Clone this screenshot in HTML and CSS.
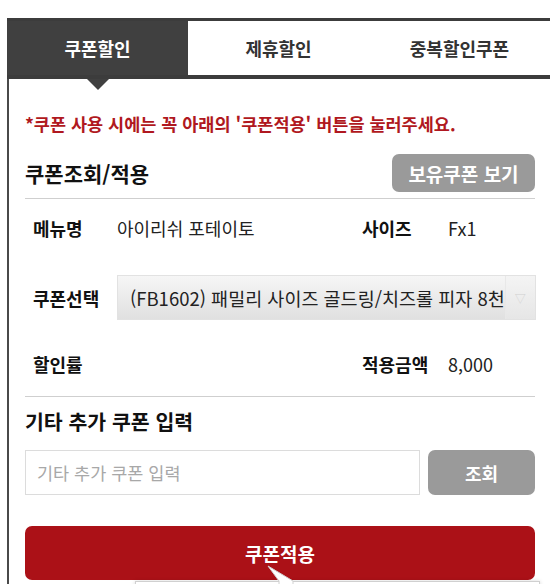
FILE: index.html
```html
<!DOCTYPE html>
<html lang="ko">
<head>
<meta charset="utf-8">
<link rel="stylesheet" href="styles.css">
</head>
<body>
<div class="frame">
  <div class="tabs">
    <div class="tab active">쿠폰할인</div>
    <div class="tab">제휴할인</div>
    <div class="tab">중복할인쿠폰</div>
  </div>
  <div class="content">
    <p class="note">*쿠폰 사용 시에는 꼭 아래의 '쿠폰적용' 버튼을 눌러주세요.</p>
    <div class="head-row">
      <h2 class="title">쿠폰조회/적용</h2>
      <button class="btn-gray btn-own">보유쿠폰 보기</button>
    </div>
    <div class="info">
      <div class="row row-menu">
        <span class="label">메뉴명</span>
        <span class="value grow">아이리쉬 포테이토</span>
        <span class="label label-r">사이즈</span>
        <span class="value">Fx1</span>
      </div>
      <div class="row row-select">
        <span class="label">쿠폰선택</span>
        <div class="select">
          <span class="select-text">(FB1602) 패밀리 사이즈 골드링/치즈롤 피자 8천</span>
          <span class="select-arrow">▽</span>
        </div>
      </div>
      <div class="row row-rate">
        <span class="label grow">할인률</span>
        <span class="label label-r">적용금액</span>
        <span class="value">8,000</span>
      </div>
    </div>
    <h2 class="title title2">기타 추가 쿠폰 입력</h2>
    <div class="input-row">
      <div class="input"><span class="placeholder">기타 추가 쿠폰 입력</span></div>
      <button class="btn-gray btn-search">조회</button>
    </div>
    <button class="btn-apply">쿠폰적용</button>
  </div>
</div>
<div class="tooltip">
  <svg class="tip-pointer" width="30" height="20" viewBox="0 0 30 20"><polygon points="1,1 26,16 26,20 12,20 12,16" fill="#fff" stroke="#d0d0d0" stroke-width="1"/></svg>
</div>
</body>
</html>
```
FILE: styles.css
```css
* { box-sizing: border-box; }
html, body { margin: 0; padding: 0; background: #fff; }
body {
  font-family: "Noto Sans CJK KR", "Noto Sans", sans-serif;
  color: #222;
  width: 550px;
  height: 584px;
  overflow: hidden;
  position: relative;
}
.frame {
  margin: 18px 0 0 7px;
  border-left: 2px solid #4a4a4a;
  min-height: 600px;
}
.tabs {
  display: flex;
  height: 61px;
  margin-left: -2px;
}
.tab {
  flex: 1;
  display: flex;
  align-items: center;
  justify-content: center;
  font-size: 18px;
  font-weight: 700;
  color: #333;
  background: #fff;
  border-top: 3px solid #3c3c3c;
  border-bottom: 4px solid #3c3c3c;
}
.tab.active {
  background: #404040;
  color: #fff;
  position: relative;
}
.tab.active::after {
  content: "";
  position: absolute;
  left: 50%;
  bottom: -15px;
  margin-left: -11px;
  border-left: 11px solid transparent;
  border-right: 11px solid transparent;
  border-top: 11px solid #404040;
}
.content {
  padding: 33px 15px 0 16px;
}
.note {
  margin: 0;
  font-size: 17.5px;
  line-height: 24px;
  font-weight: 700;
  color: #b01820;
  white-space: nowrap;
}
.head-row {
  display: flex;
  justify-content: space-between;
  align-items: center;
  margin-top: 18px;
  padding-bottom: 6px;
  border-bottom: 1px solid #cfcfcf;
}
.title {
  margin: 0;
  font-size: 21px;
  line-height: 28px;
  font-weight: 700;
  color: #111;
}
button {
  font-family: inherit;
  border: none;
  cursor: pointer;
}
.btn-gray {
  background: #9a9a9a;
  color: #fff;
  font-weight: 700;
  border-radius: 7px;
}
.btn-own {
  width: 143px;
  height: 38px;
  font-size: 19px;
  padding: 0;
}
.info {
  padding: 13px 0 16px 8px;
  border-bottom: 1px solid #cfcfcf;
}
.row {
  display: flex;
  align-items: center;
  font-size: 18px;
}
.row-menu, .row-rate { height: 32px; }
.row-select { margin: 31px 0 28px; }
.label {
  font-weight: 700;
  color: #111;
  width: 84px;
  flex-shrink: 0;
}
.label.grow { flex: 1; }
.label-r { width: 86px; }
.value { color: #222; width: 87px; }
.value.grow { flex: 1; width: auto; }
.select {
  flex: 1;
  height: 45px;
  display: flex;
  align-items: center;
  background: linear-gradient(#f6f6f6, #e0e0e0);
  border: 1px solid #e2e2e2;
}
.select-text {
  flex: 1;
  padding-left: 12px;
  font-size: 18.5px;
  color: #222;
  white-space: nowrap;
  overflow: hidden;
}
.select-arrow {
  width: 30px;
  height: 100%;
  display: flex;
  align-items: center;
  justify-content: center;
  border-left: 1px solid #e8e8e8;
  background: linear-gradient(#f4f4f4, #e6e6e6);
  color: #d0d0d0;
  font-size: 11px;
}
.title2 { margin-top: 10px; font-size: 20.5px; }
.input-row {
  display: flex;
  gap: 8px;
  margin-top: 15px;
  height: 45px;
}
.input {
  width: 395px;
  height: 45px;
  border: 1px solid #dcdcdc;
  display: flex;
  align-items: center;
  padding-left: 11px;
}
.placeholder {
  color: #a8a8a8;
  font-size: 17.5px;
}
.btn-search {
  flex: 1;
  height: 45px;
  font-size: 18px;
}
.btn-apply {
  display: block;
  width: 100%;
  margin-top: 31px;
  height: 54px;
  background: #ab1117;
  color: #fff;
  font-size: 19px;
  font-weight: 700;
  border-radius: 7px;
}
.tooltip {
  position: absolute;
  left: 135px;
  top: 581px;
  width: 405px;
  height: 30px;
  background: #fff;
  border: 1px solid #d0d0d0;
  box-shadow: 0 0 4px rgba(0,0,0,0.15);
}
.tip-pointer {
  position: absolute;
  left: 131px;
  top: -17px;
}
```
